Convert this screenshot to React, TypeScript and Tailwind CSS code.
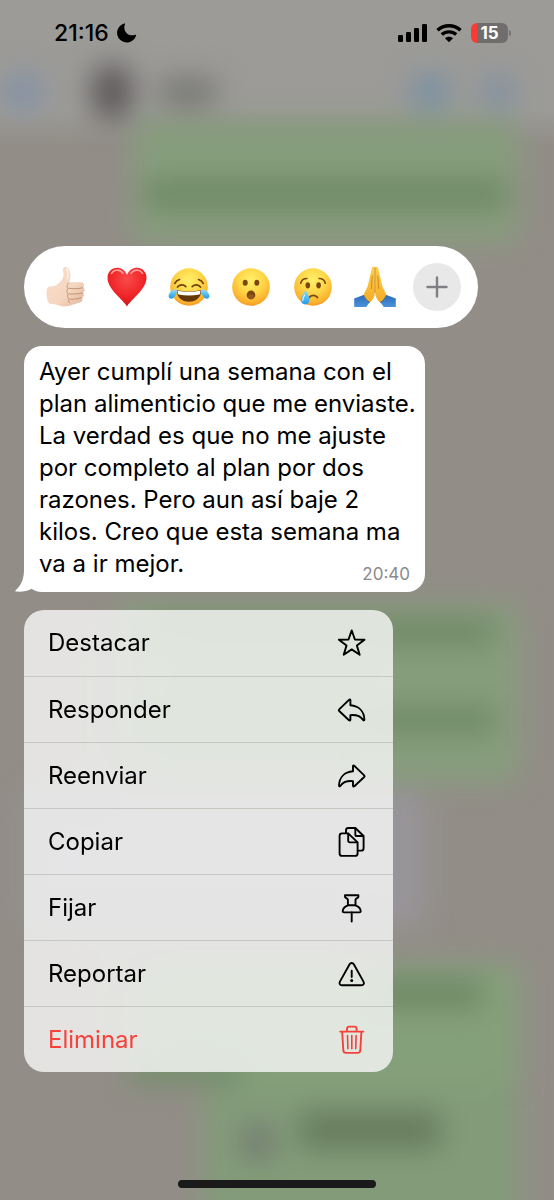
import type { ReactNode } from "react";

const line = {
  width: 30,
  height: 30,
  viewBox: "0 0 30 30",
  fill: "none",
  stroke: "currentColor",
  strokeWidth: 1.9,
  strokeLinejoin: "round",
  strokeLinecap: "round",
  "aria-hidden": true,
} as const;

const ReplyPath = () => (
  <path d="M13.4 5.2c-.1-.9-.8-1-1.400-.4L2.200 14.400c-.5.5-.5 1.100 0 1.600L12 25.200c.6.6 1.300.4 1.400-.4v-4.700c5.800-.4 10 .6 12.500 4.700.6 1 1.500.8 1.500-.3-.3-8.200-5.600-13.500-14-14.200z" />
);

const StarIcon = () => (
  <svg {...line}>
    <path d="M14.700 2.400 17.900 11.500l9.600.2-7.600 5.900 2.800 9.200-8-5.400-8 5.400 2.800-9.200-7.600-5.900 9.600-.2z" />
  </svg>
);

const ReplyIcon = () => (
  <svg {...line}>
    <ReplyPath />
  </svg>
);

const ForwardIcon = () => (
  <svg {...line}>
    <g transform="matrix(-1 0 0 1 29.400 0)">
      <ReplyPath />
    </g>
  </svg>
);

const CopyIcon = () => (
  <svg {...line}>
    <path d="M9 6V3.400A2.400 2.400 0 0 1 11.400 1H18.300L26.600 9V21.200a2.400 2.400 0 0 1-2.400 2.400H21.300" />
    <path d="M18.300 1.400v6a1.600 1.600 0 0 0 1.600 1.600h6.200" />
    <path d="M5 6.400h6.200l9.400 9V26.500a2.400 2.400 0 0 1-2.400 2.400H5a2.400 2.400 0 0 1-2.400-2.400V8.800A2.400 2.400 0 0 1 5 6.400z" />
    <path d="M11.200 6.700v7.100a1.600 1.600 0 0 0 1.600 1.600h7.200" />
  </svg>
);

const PinIcon = () => (
  <svg {...line}>
    <path d="M8 2.200h13.400v1.700c0 .8-2.900 1.700-2.900 2.700v5.700c3.200 1.300 5.200 3.300 5.200 5.900 0 .9-.4 1.200-1.300 1.200H7c-.9 0-1.300-.3-1.300-1.200 0-2.600 2-4.600 5.200-5.900V6.600C10.900 5.600 8 4.700 8 3.900z" />
    <path d="M11 12.300h7.400M14.700 19.500v9" />
  </svg>
);

const WarnIcon = () => (
  <svg {...line}>
    <path d="M12.600 5.300c1-1.700 3.200-1.700 4.200 0l9.700 17.300c1 1.800.1 3.600-2 3.600H4.900c-2.100 0-3-1.800-2-3.600z" />
    <path d="M14.700 11.700v6.300" />
    <circle cx="14.700" cy="21.500" r=".6" fill="currentColor" />
  </svg>
);

const TrashIcon = () => (
  <svg {...line}>
    <path d="M3.200 6.600h23.200M10 6.200V3.800c0-1.300.9-2.200 2.300-2.200h5c1.400 0 2.300.9 2.300 2.200v2.400M5.200 6.900l1.100 18.300c.1 1.700 1.100 2.700 2.700 2.700h11.600c1.600 0 2.600-1 2.700-2.700L24.400 6.900" />
    <path d="m10.500 10.500.4 13.200M14.800 10.500v13.200M19.100 10.500l-.4 13.200" strokeWidth="1.600" />
  </svg>
);

const ACTIONS: { label: string; icon: ReactNode; danger?: boolean }[] = [
  { label: "Destacar", icon: <StarIcon /> },
  { label: "Responder", icon: <ReplyIcon /> },
  { label: "Reenviar", icon: <ForwardIcon /> },
  { label: "Copiar", icon: <CopyIcon /> },
  { label: "Fijar", icon: <PinIcon /> },
  { label: "Reportar", icon: <WarnIcon /> },
  { label: "Eliminar", icon: <TrashIcon />, danger: true },
];

const emoji = { width: 42, height: 42, viewBox: "0 0 42 42", "aria-hidden": true } as const;

// gradients shared by all the reaction drawings
const EmojiDefs = () => (
  <svg width="0" height="0" className="absolute" aria-hidden="true">
    <defs>
      <radialGradient id="face" cx=".5" cy=".32" r=".7">
        <stop offset="0" stopColor="#fff06a" />
        <stop offset=".5" stopColor="#fed546" />
        <stop offset=".85" stopColor="#fbb02d" />
        <stop offset="1" stopColor="#f19220" />
      </radialGradient>
      <radialGradient id="heart" cx=".5" cy=".3" r=".75">
        <stop offset="0" stopColor="#fb4a4a" />
        <stop offset=".6" stopColor="#ee2427" />
        <stop offset="1" stopColor="#c4121a" />
      </radialGradient>
      <linearGradient id="skin" x1="0" y1="0" x2="1" y2="1">
        <stop offset="0" stopColor="#f8dfcc" />
        <stop offset=".6" stopColor="#f5d6c0" />
        <stop offset="1" stopColor="#e0b397" />
      </linearGradient>
      <linearGradient id="tear" x1="0" y1="0" x2="0" y2="1">
        <stop offset="0" stopColor="#8fdcfb" />
        <stop offset="1" stopColor="#1e9be6" />
      </linearGradient>
      <linearGradient id="hand" x1="0" y1="0" x2="0" y2="1">
        <stop offset="0" stopColor="#fdd14b" />
        <stop offset="1" stopColor="#f5ab26" />
      </linearGradient>
      <linearGradient id="sleeve" x1="0" y1="0" x2="0" y2="1">
        <stop offset="0" stopColor="#2f6bb5" />
        <stop offset="1" stopColor="#4a93de" />
      </linearGradient>
    </defs>
  </svg>
);

const Thumb = () => (
  <svg {...emoji} viewBox="-1 0 42 42">
    <path
      d="M2.200 22.500c1-3.200 5.600-1.600 8.300-3 3.600-1.900 7.400-6.200 8-9.700.3-2-.9-5.200-.5-7 .5-2.400 3.700-2.500 5.300-.4 2.700 3.700 2.500 8.800 1 13.800l12.100.1c2.700.1 3.600 3.700 1.700 5.100 2.200 1 2.100 4.400-.2 5.300 1.700 1.200 1.300 4.300-1 5 1.300 1.300.4 4.300-2.200 4.900-5.200 1.200-12.700 5.500-19.100 3.400-3-1-7-2.100-11-2.300-3.500-3.700-3.700-10.800-2.400-15.200z"
      fill="url(#skin)"
    />
    <path d="M24.300 16.300c-2.100 1.600-3 4.400-1.300 6.400-1.700 1.700-1.400 4.200.3 5.200-1.300 1.600-.8 3.900.8 5-1 1.600-.6 3.200 1 4.300" fill="none" stroke="#c0916f" strokeWidth=".9" />
    <path d="M23.500 22.300c4.500.7 9.500.6 14.600-.6M23.800 27.700c4.500.7 9.300.4 14-1M24.500 33c4 .5 8.200 0 12.300-1.200" fill="none" stroke="#c4957a" strokeWidth="1.100" />
    <path d="M21.500 3.200c1.800 2.500 1.600 6.300.7 9.600" fill="none" stroke="#fff0e5" strokeWidth="1.500" strokeLinecap="round" />
  </svg>
);

const Heart = () => (
  <svg {...emoji}>
    <path
      d="M21 40.500C17.500 34 1.500 23.500 1.500 11.800 1.500 5.500 6 1.700 11 1.700c4.300 0 8 2.500 10 7 2-4.500 5.700-7 10-7 5 0 9.500 3.800 9.500 10.100C40.500 23.500 24.500 34 21 40.500z"
      fill="url(#heart)"
    />
    <path d="M5.500 7.500C7.300 3.700 13.500 2.500 17 7.300M25 7.300c3.500-4.800 9.700-3.600 11.500.2" fill="none" stroke="#ff9a97" strokeWidth="1.600" strokeLinecap="round" />
  </svg>
);

const Face = () => <circle cx="21" cy="21" r="18.800" fill="url(#face)" />;

const Joy = () => (
  <svg {...emoji}>
    <Face />
    <g fill="none" stroke="#6d3f0e" strokeWidth="1.700" strokeLinecap="round">
      <path d="M6.800 17.300c1-2 2.700-3.300 4.700-3.800M35.200 17.300c-1-2-2.700-3.300-4.700-3.800" />
      <path d="M9.500 21c2.100-2.700 5.900-2.800 8.300-.4M32.500 21c-2.100-2.700-5.900-2.800-8.300-.4" />
    </g>
    <path d="M8.600 24.300c7.800 1.500 17 1.500 24.800 0-.2 6.800-5.200 11.500-12.400 11.500S8.800 31.100 8.600 24.300z" fill="#653709" />
    <path d="M9.600 24.700c7.500 1.300 15.300 1.300 22.800 0 .2 1.300-.1 2.900-.8 3.700-6.600 1.300-14.600 1.300-21.200 0-.7-.8-1-2.400-.8-3.700z" fill="#fff" />
    <path d="M6.700 23.500c2.600-.4 2.800 1.300 1.700 4-1.200 3-3 5.200-5.100 5.200-2.200 0-3.200-2.100-2.500-4 .8-2.500 3.200-4.700 5.900-5.200zM35.300 23.500c-2.600-.4-2.800 1.300-1.700 4 1.200 3 3 5.200 5.100 5.200 2.200 0 3.200-2.100 2.500-4-.8-2.500-3.200-4.700-5.900-5.200z" fill="url(#tear)" />
  </svg>
);

const Wow = () => (
  <svg {...emoji}>
    <Face />
    <g fill="#7a4610">
      <ellipse cx="15.200" cy="16.800" rx="2.500" ry="3" />
      <ellipse cx="26.800" cy="16.800" rx="2.500" ry="3" />
      <ellipse cx="21" cy="29" rx="4.300" ry="4.400" />
    </g>
    <ellipse cx="21" cy="30.500" rx="2.900" ry="2.300" fill="#96591b" />
  </svg>
);

const Cry = () => (
  <svg {...emoji}>
    <Face />
    <ellipse cx="15.800" cy="19.300" rx="2.300" ry="3.100" fill="#7a4610" />
    <ellipse cx="26.600" cy="19.300" rx="2.300" ry="3.100" fill="#7a4610" />
    <g fill="none" stroke="#7a4610" strokeWidth="1.600" strokeLinecap="round">
      <path d="M8.700 17.200c.8-3 3-4.700 6.200-4.700M33.300 17.200c-.8-3-3-4.700-6.200-4.700" />
      <path d="M17.200 31.500c1.900-2.900 6.300-2.900 8.300 0" strokeWidth="1.800" />
    </g>
    <path d="M13.500 24.300c2 3.300 4 6.500 4 9.500 0 2.800-1.900 4.700-4.300 4.700S9 36.600 9 33.800c0-3 2.500-6.200 4.500-9.500z" fill="url(#tear)" />
    <path d="M12.600 29c-1.200 2-2 3.500-1.800 5.300" fill="none" stroke="#d3f3ff" strokeWidth="1.300" strokeLinecap="round" />
  </svg>
);

const Pray = () => (
  <svg {...emoji}>
    <path d="M.2 32.500 9.500 29l6.500 6.700-3.800 5.300H.2zM41.800 32.500 32.500 29 26 35.700l3.800 5.300h12z" fill="url(#sleeve)" />
    <path
      d="M20.800 1.300c-1.500-1-2.800-.3-3 1.300L13.600 20.500 9.300 29.200c1.300 3.300 3.600 5.800 6.400 7.600 2.600-1.900 4.700-5.300 5.100-9.800z"
      fill="url(#hand)"
    />
    <path
      d="M21.200 1.300c1.500-1 2.800-.3 3 1.300l4.200 17.900 4.300 8.700c-1.300 3.300-3.600 5.800-6.400 7.600-2.600-1.900-4.700-5.300-5.100-9.800z"
      fill="url(#hand)"
    />
    <path d="M21 1.300V27M18.300 9.500l-1 13.500M23.700 9.500l1 13.500" fill="none" stroke="#c9811b" strokeWidth=".9" />
    <path d="M9.500 29.200c1.300 3.200 3.500 5.600 6.200 7.300M32.500 29.200c-1.300 3.200-3.500 5.600-6.200 7.300" fill="none" stroke="#27599c" strokeWidth=".9" />
  </svg>
);

const REACTIONS = [
  { name: "Me gusta", art: <Thumb /> },
  { name: "Corazón", art: <Heart /> },
  { name: "Risa", art: <Joy /> },
  { name: "Asombro", art: <Wow /> },
  { name: "Tristeza", art: <Cry /> },
  { name: "Gracias", art: <Pray /> },
];

function StatusBar() {
  return (
    <header className="flex h-[66px] items-center justify-between pr-[43px] pl-[54px]">
      <div className="flex items-center gap-2">
        <time className="text-[23px] leading-8 font-medium">21:16</time>
        <svg width="20" height="20" viewBox="0 0 20 20" aria-hidden="true">
          <path d="M7.300.4c.5-.2.9.2.7.7-2.600 6.300 2.600 13.200 10.300 10.700.6-.2 1 .2.8.7A9.700 9.700 0 1 1 7.300.4z" />
        </svg>
      </div>
      <div className="flex items-center gap-[9px]">
        <svg width="29" height="20" viewBox="0 0 29 20" aria-hidden="true">
          <rect x="0" y="12" width="5" height="7" rx="1.300" />
          <rect x="8" y="9" width="5" height="10" rx="1.300" />
          <rect x="16" y="5" width="5" height="14" rx="1.300" />
          <rect x="24" y="1" width="5" height="18" rx="1.300" />
        </svg>
        <svg width="26" height="20" viewBox="0 0 26 20" fill="none" stroke="#000" strokeWidth="3.400" aria-hidden="true">
          <path d="M1.500 7.200c6.400-6 16.600-6 23 0M5.800 11.600c4.100-3.700 10.300-3.700 14.400 0" />
          <path d="M13 19.300 9 15.200c2.300-2 5.700-2 8 0z" fill="#000" stroke="none" />
        </svg>
        <div className="flex items-center gap-px">
          <div className="flex h-5 w-[37px] items-center justify-center rounded-md bg-linear-to-r from-[#fb3b33] from-15% to-[#6f6e6c] to-15% text-[17px] leading-5 font-bold text-white">
            15
          </div>
          <div className="h-[6px] w-[2px] rounded-r-sm bg-[#777674]" />
        </div>
      </div>
    </header>
  );
}

// The conversation left out of focus behind the menu
function BlurredChat() {
  return (
    <div className="absolute inset-0 overflow-hidden bg-linear-to-b from-[#9c9b98] from-[110px] to-[#928e87] to-[145px]">
      <div className="flex flex-col items-end pr-9 blur-[14px]" aria-hidden="true">
        <div className="-mr-9 flex h-[120px] items-center self-stretch pt-16">
          <div className="h-9 w-11 rounded-full bg-[#8492a6]" />
          <div className="ml-12 h-14 w-10 rounded-full bg-[#5d5859]" />
          <div className="ml-7 h-7 w-14 bg-[#777773]" />
          <div className="mr-8 ml-auto h-9 w-10 rounded-full bg-[#7890a3]" />
          <div className="mr-10 h-9 w-8 rounded-full bg-[#8090a2]" />
        </div>
        <div className="flex h-[122px] w-[384px] flex-col items-center rounded-xl bg-[#869d7c] pt-[60px]">
          <div className="h-7 w-[360px] bg-[#6e8764]" />
        </div>
        <div className="mt-[362px] flex h-[178px] w-[400px] flex-col items-end gap-[64px] rounded-xl bg-[#869d7c] pt-4 pr-6">
          <div className="h-6 w-[344px] bg-[#6e8764]" />
          <div className="h-6 w-[344px] bg-[#6e8764]" />
        </div>
        <div className="mt-2 ml-7 h-[136px] w-[396px] self-start rounded-xl bg-[#98959a]" />
        <div className="mt-[38px] flex h-[120px] w-[388px] flex-col justify-between rounded-xl bg-[#84a07a] pt-4 pr-9">
          <div className="h-7 w-28 self-end bg-[#6e8764]" />
          <div className="h-6 w-28 bg-[#758c6c]" />
        </div>
        <div className="flex h-[180px] w-[314px] items-start gap-6 bg-[#839b79] pt-7 pl-9">
          <div className="mt-3 h-9 w-9 rounded-full bg-[#727a70]" />
          <div className="h-9 w-[140px] bg-[#667b5d]" />
        </div>
      </div>
    </div>
  );
}

export default function App() {
  return (
    <div className="relative flex min-h-screen flex-col overflow-hidden font-['Inter',sans-serif] text-black">
      <BlurredChat />
      <EmojiDefs />

      <div className="relative flex grow flex-col">
        <StatusBar />

        <main className="mt-[180px] flex flex-col items-start px-6">
          <div className="flex h-[82px] items-center rounded-full bg-white px-[10px]">
            {REACTIONS.map((r) => (
              <button key={r.name} aria-label={r.name} className="flex w-[62px] justify-center">
                {r.art}
              </button>
            ))}
            <div className="flex w-[62px] justify-center">
              <button
                aria-label="Más reacciones"
                className="flex size-12 items-center justify-center rounded-full bg-[#e8e8e9] text-[#808084]"
              >
                <svg width="22" height="22" viewBox="0 0 22 22" stroke="currentColor" strokeWidth="2.400" strokeLinecap="round">
                  <path d="M11 1.500v19M1.500 11h19" />
                </svg>
              </button>
            </div>
          </div>

          <article className="relative mt-[18px] w-[401px] rounded-[18px] bg-white pt-[10px] pr-2 pb-3 pl-[15px] text-[24px] leading-8">
            <svg className="absolute bottom-0 -left-[9px]" width="28" height="24" viewBox="0 0 28 24" fill="#fff" aria-hidden="true">
              <path d="M9 0c.2 9-1.500 16.500-8.300 22.300-.6.6-.4 1.200.5 1.300 6 .6 11.600-.8 15.500-2.900L28 10V0z" />
            </svg>
            <p className="relative">
              Ayer cumplí una semana con el plan alimenticio que me enviaste. La verdad es que no me
              ajuste por completo al plan por dos razones. Pero aun así baje 2 kilos. Creo que esta
              semana ma
            </p>
            {/* the last line shares its row with the hour */}
            <div className="relative flex items-end justify-between pr-[7px]">
              <p>va a ir mejor.</p>
              <time className="-mb-1 text-[17px] leading-5 text-[#8a8a8d]">20:40</time>
            </div>
          </article>

          <ul className="mt-[18px] w-[369px] overflow-hidden rounded-[20px] bg-[#fbfbfb]/78 backdrop-blur-xl">
            {ACTIONS.map((a) => (
              <li key={a.label} className="h-[66px] border-[#c5c7c3] not-first:border-t">
                <button
                  className={`flex h-full w-full items-center justify-between pr-[26px] pl-6 text-[24px] leading-8 ${
                    a.danger ? "text-[#f5413a]" : ""
                  }`}
                >
                  {a.label}
                  {a.icon}
                </button>
              </li>
            ))}
          </ul>
        </main>

        <div className="mt-auto mb-3 h-2 w-[198px] self-center rounded-full bg-[#1a1a1a]" />
      </div>
    </div>
  );
}
